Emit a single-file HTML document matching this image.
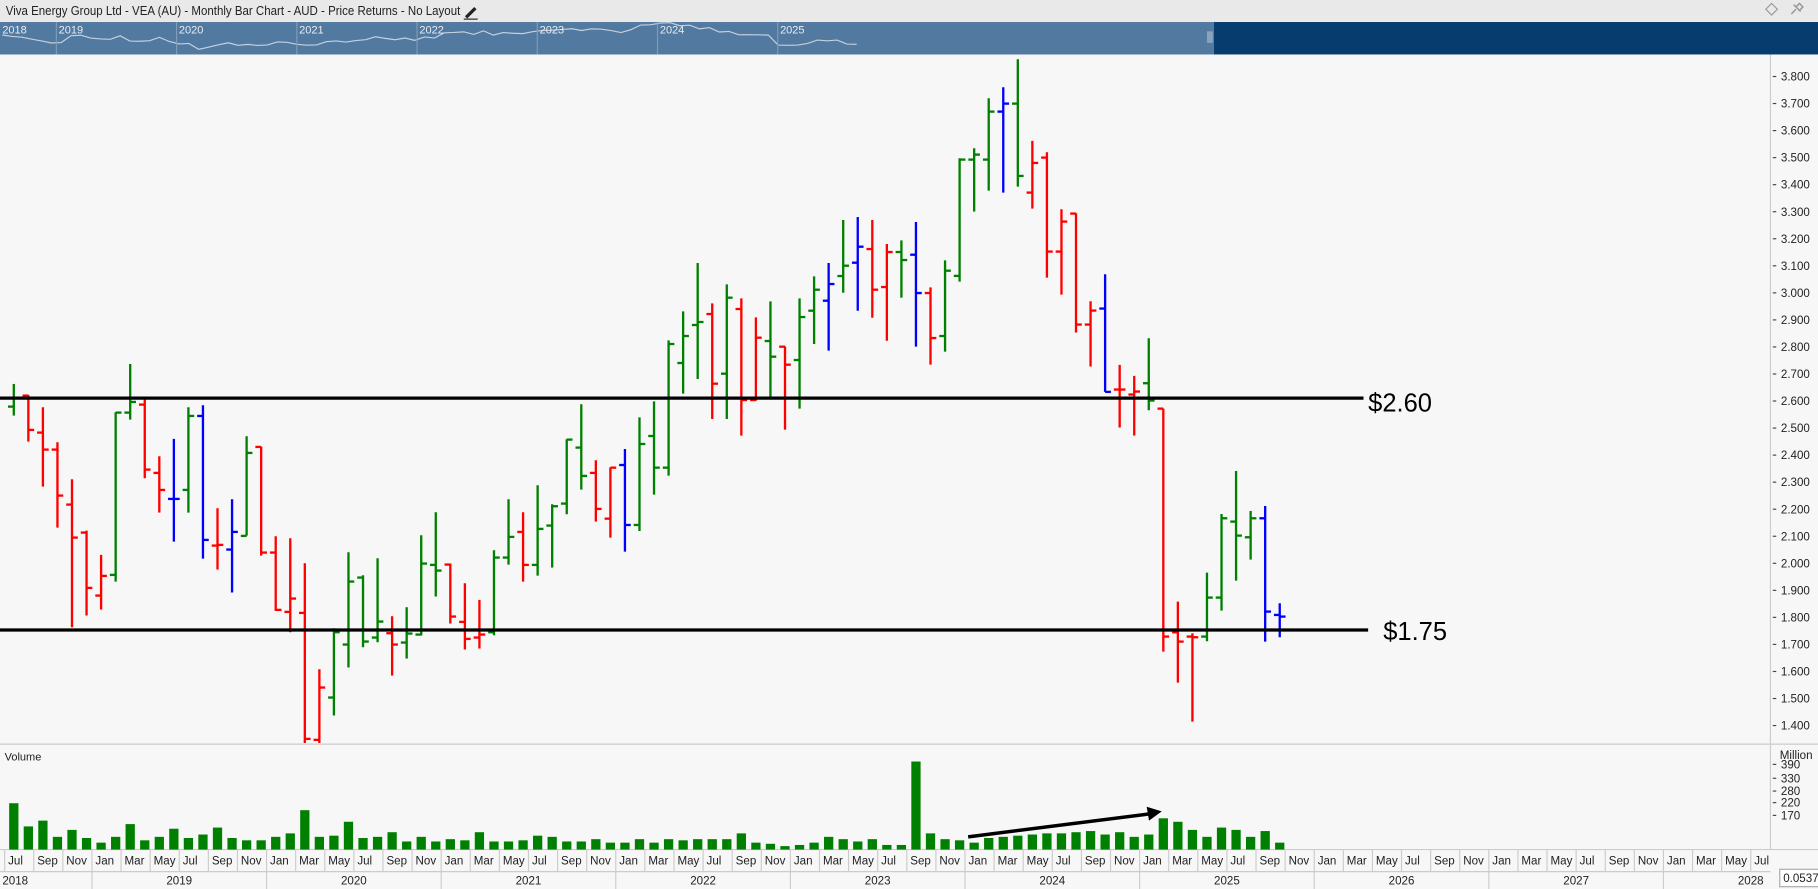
<!DOCTYPE html>
<html><head><meta charset="utf-8"><style>
html,body{margin:0;padding:0;background:#f7f7f7;overflow:hidden}
svg{display:block;font-family:"Liberation Sans",sans-serif}
</style></head><body>
<svg id="s" xmlns="http://www.w3.org/2000/svg" width="1818" height="889" viewBox="0 0 1568 767" preserveAspectRatio="none">
<rect x="0" y="0" width="1568" height="767" fill="#f7f7f7"/>
<rect x="0" y="0" width="1568" height="19" fill="#e9e9e9"/>
<text x="5" y="13" font-size="11" fill="#222" textLength="392" lengthAdjust="spacingAndGlyphs">Viva Energy Group Ltd - VEA (AU) - Monthly Bar Chart - AUD - Price Returns - No Layout</text>
<path d="M401 14 L409 6 L411 8 L403 16 Z" fill="#222"/><line x1="400" y1="16.5" x2="412" y2="16.5" stroke="#222" stroke-width="1"/>
<path d="M1528 3 L1533 8 L1528 13 L1523 8 Z" fill="none" stroke="#999" stroke-width="1"/>
<path d="M1545 12 L1549 8 M1547 4 L1553 10 M1549 6 L1552 3 L1555 6 L1552 9" fill="none" stroke="#999" stroke-width="1.3"/>
<rect x="0" y="19" width="1047" height="28" fill="#52799f"/>
<rect x="1047" y="19" width="521" height="28" fill="#063d6e"/>
<rect x="1041" y="27" width="5" height="10" fill="#8aa3bd"/>
<g id="mm"></g>
<g id="grid"></g>
<g id="bars"></g>
<line x1="0" y1="343.5" x2="1176" y2="343.5" stroke="#000" stroke-width="2.8"/>
<line x1="0" y1="543.5" x2="1180" y2="543.5" stroke="#000" stroke-width="2.8"/>
<text x="1180" y="355" font-size="22" fill="#000">$2.60</text>
<text x="1193" y="552" font-size="22" fill="#000">$1.75</text>
<line x1="0" y1="642" x2="1568" y2="642" stroke="#ccc" stroke-width="1"/>
<line x1="1527" y1="47" x2="1527" y2="733" stroke="#ccc" stroke-width="1"/>
<line x1="0" y1="733" x2="1568" y2="733" stroke="#ccc" stroke-width="1"/>
<line x1="0" y1="752" x2="1527" y2="752" stroke="#ccc" stroke-width="1"/>
<text x="4" y="656" font-size="9.5" fill="#222">Volume</text>
<g id="vol"></g>
<line x1="835" y1="722" x2="993" y2="702" stroke="#000" stroke-width="3"/>
<path d="M1002 700 L989 696 L991 708 Z" fill="#000"/>
<g id="axis" font-size="10" fill="#222"></g>
<rect x="1535" y="750" width="40" height="15" fill="#fff" stroke="#aaa" stroke-width="1"/>
<text x="1538" y="761" font-size="10" fill="#222">0.0537</text>
</svg>
<script>
var NS="http://www.w3.org/2000/svg";
function el(p,t,a,txt){var e=document.createElementNS(NS,t);for(var k in a)e.setAttribute(k,a[k]);if(txt!==undefined)e.textContent=txt;document.getElementById(p).appendChild(e);return e;}
var C={g:"#008000",r:"#ff0000",b:"#0000ff"};
var z3=[[132,227,200,175,'g'],[165,305,167,270,'r'],[202,440,278,329,'r'],[307,563,329,467,'r'],[418,862,494,593,'r'],[572,827,578,744,'r'],[645,809,767,708,'r'],[217,725,705,218,'g'],[72,239,218,186,'g'],[170,415,194,389,'r'],[349,518,399,450,'r'],[297,605,477,477,'b'],[202,518,450,228,'g'],[196,656,228,600,'b'],[505,689,617,615,'r'],[478,758,629,576,'b'],[289,587,588,339,'g'],[320,647,321,638,'r'],[589,813,638,810,'r'],[595,877,816,776,'r'],[670,1210,819,1197,'r'],[988,1210,1200,1043,'r'],[865,1127,1073,877,'g'],[637,983,914,725,'g'],[706,922,713,905,'g'],[655,907,893,845,'g'],[829,1007,880,914,'r'],[802,956,908,881,'g'],[586,887,884,671,'g'],[517,770,675,692,'g'],[671,851,674,830,'r'],[730,929,846,897,'r'],[780,926,893,884,'r'],[631,886,877,653,'g'],[478,674,653,591,'g'],[517,725,576,675,'r'],[436,707,675,567,'g'],[493,683,557,499,'g'],[298,523,491,299,'g'],[193,449,323,408,'g'],[361,545,399,507,'r']];
var z4=[[802,1013,956,803,'r'],[747,1055,795,975,'b'],[652,993,975,732,'g'],[604,884,708,803,'g'],[421,827,803,432,'g'],[334,581,489,408,'g'],[189,537,375,366,'g'],[310,657,342,551,'r'],[253,657,521,293,'g'],[295,707,327,600,'r'],[352,602,600,413,'r'],[304,592,423,470,'g'],[439,689,440,494,'r'],[295,626,480,351,'g'],[229,432,332,269,'g'],[189,452,302,252,'b'],[60,278,228,197,'g'],[51,332,188,140,'b'],[60,353,147,269,'r'],[132,422,261,156,'r'],[121,293,156,180,'g'],[66,440,164,279,'b'],[262,494,279,414,'r'],[181,455,408,212,'g']];
var z5=[[325,695,678,329,'g'],[295,485,329,314,'g'],[145,422,329,185,'g'],[112,428,185,161,'b'],[28,410,161,378,'g'],[273,476,428,339,'r'],[307,683,323,605,'r'],[478,734,605,515,'r'],[490,848,491,824,'r'],[754,950,824,782,'r'],[673,1026,776,1026,'b'],[945,1133,1019,1019,'r'],[978,1157,1034,1025,'r'],[865,1081,1000,1052,'g']];
var z6=[[476,1205,476,1160,'r'],[1055,1298,1147,1175,'r'],[1150,1415,1160,1162,'r'],[968,1174,1160,1043,'g'],[792,1082,1043,805,'g'],[663,992,815,857,'g'],[783,929,862,805,'g'],[768,1175,805,1085,'b'],[1060,1162,1095,1100,'b']];
var bars=[];
function add(arr,off){arr.forEach(function(b){bars.push([off+b[0]/3.478,Math.min(641,off+b[1]/3.478),off+b[2]/3.478,off+b[3]/3.478,b[4]]);});}
add(z3,293.3);add(z4,172.6);add(z5,43.1);add(z6,215.7);
var mm=[];
bars.forEach(function(b,i){
 var x=11.9+12.55*i,c=C[b[4]];
 el("bars","line",{x1:x,y1:b[0],x2:x,y2:b[1],stroke:c,"stroke-width":2});
 el("bars","line",{x1:x-5,y1:b[2],x2:x,y2:b[2],stroke:c,"stroke-width":2});
 el("bars","line",{x1:x,y1:b[3],x2:x+5,y2:b[3],stroke:c,"stroke-width":2});
 mm.push((2+8.47*i).toFixed(1)+","+(18+(b[3]-52)*0.042).toFixed(1));
});
el("mm","polyline",{points:mm.join(" "),fill:"none",stroke:"#c3d1e0","stroke-width":1});
var yrs=["2018","2019","2020","2021","2022","2023","2024","2025"];
yrs.forEach(function(y,k){var x=k==0?0:48.6+103.7*(k-1);if(k>0)el("mm","line",{x1:x,y1:19,x2:x,y2:47,stroke:"#7f9cb9","stroke-width":1});el("mm","text",{x:x+2,y:29,"font-size":9.5,fill:"#e6edf4"},y);});
var vt=[693,713,708,722,716,723,727,722,711,725,722,715,723,720,714,723,725,725,722,719,699,722,721,709,723,722,718,726,722,726,724,725,718,726,726,725,721,722,726,726,724,727,727,724,727,724,725,724,724,724,719,727,728,730,729,727,722,724,726,724,729,729,657,719,724,725,727,723,722,721,720,719,719,718,717,720,718,722,720,706,709,716,722,714,716,722,717,727];
vt.forEach(function(t,i){var x=11.9+12.55*i;el("vol","rect",{x:x-4,y:t,width:8,height:733-t,fill:"#008000"});});
for(var p=38;p>=14;p--){var y=66+(38-p)*23.333;el("axis","line",{x1:1529,y1:y,x2:1532,y2:y,stroke:"#444","stroke-width":1});el("axis","text",{x:1536,y:y+3.5},(p/10).toFixed(3));}
el("axis","text",{x:1535,y:655},"Million");
[[390,663],[330,675],[280,686],[220,696],[170,707]].forEach(function(v){el("axis","line",{x1:1529,y1:v[1]-3.5,x2:1532,y2:v[1]-3.5,stroke:"#444","stroke-width":1});el("axis","text",{x:1536,y:v[1]},v[0]);});
var MN=["Jan","Feb","Mar","Apr","May","Jun","Jul","Aug","Sep","Oct","Nov","Dec"];
for(var m=0;m<=120;m+=2){var x=4+12.55*m;el("axis","line",{x1:x,y1:733,x2:x,y2:752,stroke:"#ccc","stroke-width":1});el("axis","text",{x:x+3,y:746},MN[(6+m)%12]);}
el("axis","text",{x:2,y:763},"2018");
for(var k=0;k<10;k++){var x=4+12.55*(6+12*k);el("axis","line",{x1:x,y1:752,x2:x,y2:767,stroke:"#ccc","stroke-width":1});el("axis","text",{x:x+75.3,y:763,"text-anchor":"middle"},String(2019+k));}
</script>
</body></html>
